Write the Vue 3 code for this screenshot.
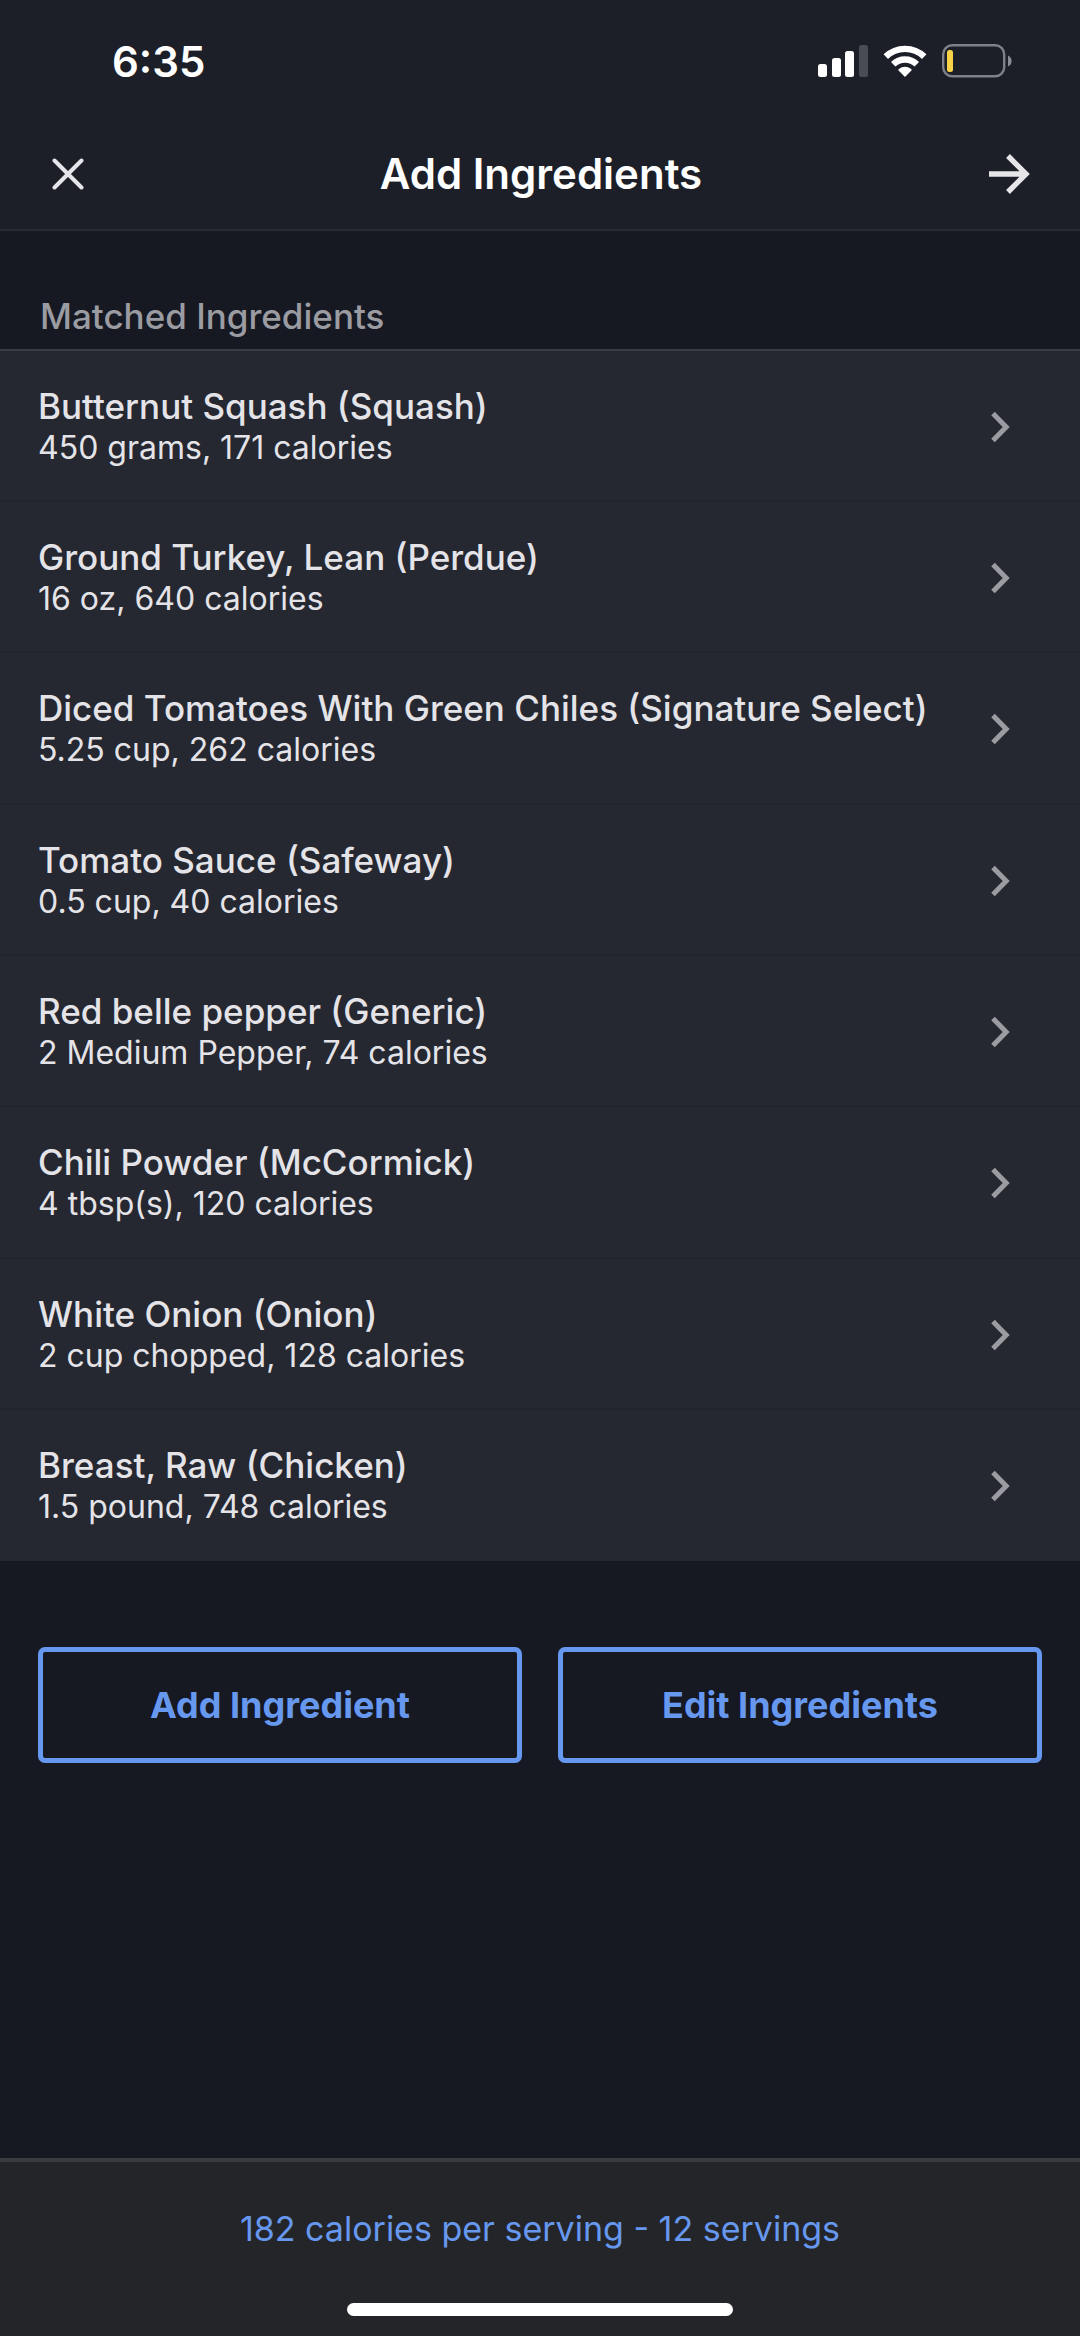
<script setup>
import { ref } from 'vue'

const time = ref('6:35')
const servings = ref(12)
const caloriesPerServing = ref(182)

const ingredients = ref([
  { name: 'Butternut Squash (Squash)', amount: '450 grams', calories: 171 },
  { name: 'Ground Turkey, Lean (Perdue)', amount: '16 oz', calories: 640 },
  { name: 'Diced Tomatoes With Green Chiles (Signature Select)', amount: '5.25 cup', calories: 262 },
  { name: 'Tomato Sauce (Safeway)', amount: '0.5 cup', calories: 40 },
  { name: 'Red belle pepper (Generic)', amount: '2 Medium Pepper', calories: 74 },
  { name: 'Chili Powder (McCormick)', amount: '4 tbsp(s)', calories: 120 },
  { name: 'White Onion (Onion)', amount: '2 cup chopped', calories: 128 },
  { name: 'Breast, Raw (Chicken)', amount: '1.5 pound', calories: 748 }
])
</script>


<template>
  <div class="screen">
    <header class="header">
      <div class="status">
        <span class="time">{{ time }}</span>
        <div class="indicators">
          <svg width="50" height="34" viewBox="0 0 50 34" aria-hidden="true">
            <rect x="0" y="20" width="9" height="13" rx="2.5" fill="#fff" />
            <rect x="14" y="14" width="9" height="19" rx="2.5" fill="#fff" />
            <rect x="27" y="7" width="9" height="26" rx="2.5" fill="#fff" />
            <rect x="41" y="1" width="9" height="32" rx="2.5" fill="#4a4c55" />
          </svg>
          <svg width="44" height="34" viewBox="0 0 44 34" aria-hidden="true">
            <g fill="none" stroke="#fff" stroke-width="6.4">
              <path d="M2.8 12.6A27.6 27.6 0 0 1 41.2 12.6" />
              <path d="M10.2 20.2A17 17 0 0 1 33.8 20.2" />
            </g>
            <path d="M22 33 15.6 26.4Q15 25.6 15.8 25Q22 20.6 28.2 25Q29 25.6 28.4 26.4Z" fill="#fff" />
          </svg>
          <svg width="70" height="34" viewBox="0 0 70 34" aria-hidden="true">
            <rect x="1.2" y="1.2" width="61" height="31" rx="9" fill="none" stroke="#7f8189" stroke-width="2.4" />
            <rect x="5" y="6" width="6" height="22" rx="2.5" fill="#f8d348" />
            <path d="M66 11.5Q69.6 13 69.6 17T66 22.5Z" fill="#8b8d94" />
          </svg>
        </div>
      </div>

      <nav class="nav">
        <button class="icon" type="button" aria-label="Close">
          <svg width="32" height="32" viewBox="0 0 32 32">
            <path d="M2.5 2.5 29.5 29.5M29.5 2.5 2.5 29.5" fill="none" stroke="#e6e6ea" stroke-width="4" stroke-linecap="round" />
          </svg>
        </button>
        <h1>Add Ingredients</h1>
        <button class="icon" type="button" aria-label="Next">
          <svg width="42" height="42" viewBox="0 0 42 42">
            <path d="M1 21H37M20 3 38 21 20 39" fill="none" stroke="#e6e6e8" stroke-width="5.4" />
          </svg>
        </button>
      </nav>
    </header>

    <main>
      <h2>Matched Ingredients</h2>

      <ul class="list">
        <li v-for="item in ingredients" :key="item.name">
          <button class="row" type="button">
            <span class="text">
              <span class="name">{{ item.name }}</span>
              <span class="detail">{{ item.amount }}, {{ item.calories }} calories</span>
            </span>
            <svg width="20" height="32" viewBox="0 0 20 32" aria-hidden="true">
              <path d="M3 2.6 16.2 16 3 29.4" fill="none" stroke="#9b9ca2" stroke-width="5" />
            </svg>
          </button>
        </li>
      </ul>

      <div class="actions">
        <button type="button">Add Ingredient</button>
        <button type="button">Edit Ingredients</button>
      </div>
    </main>

    <footer class="footer">
      <p>{{ caloriesPerServing }} calories per serving - {{ servings }} servings</p>
      <div class="home"></div>
    </footer>
  </div>
</template>


<style>
body {
  background: #161822;
}
</style>

<style scoped>
.screen {
  background: #161822;
  color: #e4e4e8;
  display: flex;
  flex-direction: column;
  font-family: Inter, "Liberation Sans", sans-serif;
  min-height: 100vh;
}

button {
  background: none;
  border: 0;
  color: inherit;
  cursor: pointer;
  font: inherit;
  margin: 0;
  padding: 0;
}

svg {
  display: block;
  flex: none;
}

/* header */
.header {
  background: #1d1f28;
  border-bottom: 2px solid #282a34;
}

.status {
  align-items: center;
  color: #fff;
  display: flex;
  height: 122px;
  justify-content: space-between;
  padding: 0 68px 0 112px;
}

.time {
  font-size: 42px;
  font-weight: 600;
}

.indicators {
  display: flex;
  gap: 15px;
}

.nav {
  align-items: center;
  display: flex;
  height: 103px;
  justify-content: space-between;
  padding: 0 50px 4px 52px;
}

.icon {
  display: flex;
  width: 42px;
}

.nav h1 {
  color: #fff;
  font-size: 42px;
  font-weight: 600;
  line-height: 50px;
  margin: 0;
}

/* list */
main {
  flex: 1;
}

h2 {
  color: #9b9ca2;
  font-size: 35px;
  font-weight: 500;
  line-height: 42px;
  margin: 0;
  padding: 64px 40px 12px;
}

.list {
  background: #252731;
  border-top: 2px solid #3b3d46;
  list-style: none;
  margin: 0;
  padding: 0;
}

.row {
  align-items: center;
  border-bottom: 2px solid #21232d;
  display: flex;
  height: 151px;
  justify-content: space-between;
  padding: 2px 70px 0 38px;
  text-align: left;
  width: 100%;
}

li:nth-child(3n) .row {
  height: 152px;
}

li:last-child .row {
  border-bottom-color: transparent;
}

.text {
  display: flex;
  flex-direction: column;
  line-height: 41px;
}

.name {
  font-size: 35px;
  font-weight: 500;
}

.detail {
  font-size: 32px;
}

/* actions */
.actions {
  display: grid;
  gap: 36px;
  grid-template-columns: 1fr 1fr;
  padding: 86px 38px;
}

.actions button {
  border: 5px solid #6798ef;
  border-radius: 7px;
  color: #6798ef;
  font-size: 36px;
  font-weight: 700;
  height: 116px;
}

/* footer */
.footer {
  align-items: center;
  background: #242529;
  border-top: 4px solid #3a3b41;
  display: flex;
  flex-direction: column;
  padding-bottom: 20px;
}

.footer p {
  color: #6798ef;
  font-size: 34px;
  line-height: 42px;
  margin: 46px 0 53px;
}

.home {
  background: #fff;
  border-radius: 7px;
  height: 13px;
  width: 386px;
}
</style>
